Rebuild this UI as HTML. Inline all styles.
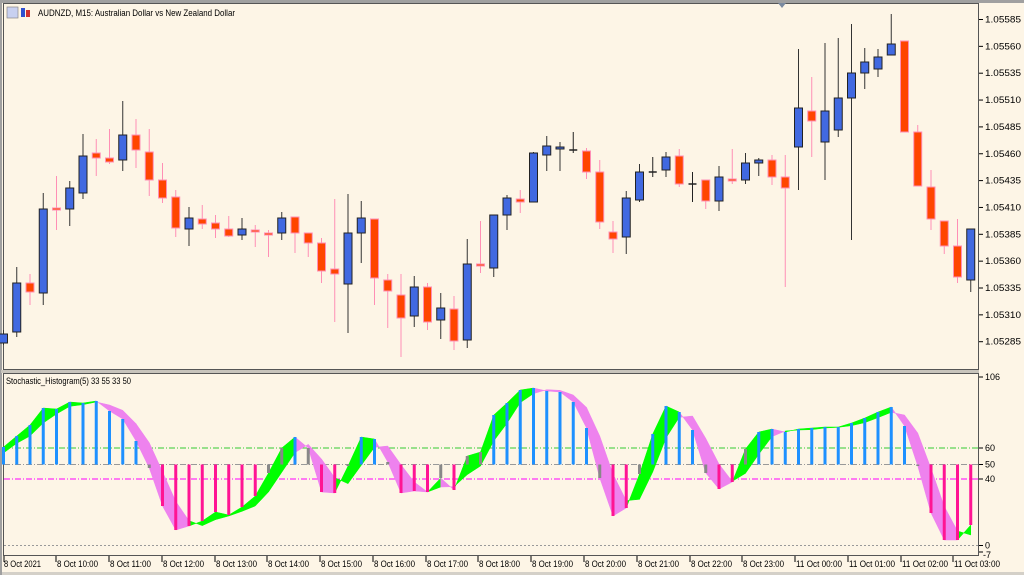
<!DOCTYPE html>
<html><head><meta charset="utf-8"><style>
html,body{margin:0;padding:0;background:#fdf5e6;width:1024px;height:575px;overflow:hidden}
svg{display:block}
text{font-family:"Liberation Sans",sans-serif;font-size:9px;fill:#000}
</style></head><body>
<svg id="s" width="1024" height="575" xmlns="http://www.w3.org/2000/svg">
<rect x="0" y="0" width="1024" height="575" fill="#fdf5e6"/>
<rect x="0" y="0" width="1024" height="3" fill="#a0a0a0"/>
<rect x="0" y="572" width="1024" height="3" fill="#d4d0c8"/>
<rect x="0" y="0" width="2" height="575" fill="#a0a0a0"/>
<rect x="3.5" y="3.5" width="975" height="366" fill="none" stroke="#555" stroke-width="1"/>
<rect x="3.5" y="373.5" width="975" height="182" fill="none" stroke="#555" stroke-width="1"/>
<rect x="1" y="370" width="978" height="3" fill="#c8c4bc"/>
<polygon points="778,3 786,3 782,8" fill="#7a8aa0"/>
<g id="lv"></g>
<g id="band"></g>
<g id="hist"></g>
<g id="candles"></g>
<!-- title -->
<rect x="7" y="7" width="11" height="11" fill="#c8d0f0" stroke="#888" stroke-width="0.7"/>
<rect x="21" y="8" width="4" height="9" fill="#3050d0"/><rect x="26" y="10" width="4" height="7" fill="#d03030"/>
<text x="38" y="16" textLength="197" lengthAdjust="spacingAndGlyphs">AUDNZD, M15:  Australian Dollar vs New Zealand Dollar</text>
<text x="6" y="384" textLength="125" lengthAdjust="spacingAndGlyphs">Stochastic_Histogram(5) 33 55 33 50</text>
<g id="pl"></g>
<g id="tl"></g>
</svg>
<script>
const NS="http://www.w3.org/2000/svg";
function el(p,t,a,txt){const e=document.createElementNS(NS,t);for(const k in a)e.setAttribute(k,a[k]);if(txt!==undefined)e.textContent=txt;document.getElementById(p).appendChild(e);return e;}
const X=i=>3.5+13.25*i;
// candles: [high, bodyTop, bodyBottom, low, bull]
const C=[[330,334,343,345,1],[267,283,332,337,1],[274,283,292,305,0],[193,209,293,305,1],[176,208,210,230,0],[181,188,209,226,1],[134,156,193,199,1],[139,153,158,176,0],[129,158,162,164,0],[101,135,160,171,1],[119,135,150,168,0],[129,152,180,196,0],[163,180,198,203,0],[190,197,228,237,0],[207,218,229,246,1],[205,219,224,229,0],[215,223,229,238,0],[216,229,236,237,0],[218,229,235,240,1],[225,230,232,247,0],[230,233,235,257,0],[212,218,233,240,1],[217,217,233,253,0],[233,233,243,257,0],[238,243,271,283,0],[199,269,274,322,0],[194,233,284,333,1],[201,218,233,263,1],[219,219,278,305,0],[274,280,291,328,0],[274,295,318,357,0],[276,287,316,327,1],[283,287,322,330,0],[293,308,320,339,1],[296,309,341,350,0],[239,264,340,348,1],[221,264,265,273,0],[215,215,268,277,1],[195,198,215,230,1],[190,199,202,213,0],[152,153,202,202,1],[136,146,155,171,1],[142,147,149,171,1],[132,150,150,153,2],[148,151,172,179,0],[160,172,222,229,0],[221,232,239,253,0],[191,198,237,254,1],[164,172,200,202,1],[157,172,172,177,2],[152,157,170,177,1],[149,156,184,187,0],[172,184,184,202,2],[180,180,201,209,0],[166,177,201,211,1],[149,179,180,184,0],[153,163,180,184,1],[158,160,163,176,1],[155,160,177,185,0],[155,177,188,287,0],[49,108,147,190,1],[77,111,121,157,0],[43,111,142,180,1],[38,98,130,137,1],[24,73,98,240,1],[48,62,73,89,1],[49,57,69,77,1],[14,44,55,55,1],[41,41,132,132,0],[125,132,186,186,0],[170,187,219,230,0],[221,221,246,254,0],[219,246,277,283,0],[229,229,280,292,1]];
C.forEach((c,i)=>{const x=X(i);const [h,t,b,l,k]=c;
 const wc=k==1?"#333":(k==2?"#222":"#ff8fb5");
 el("candles","line",{x1:x,x2:x,y1:h,y2:l,stroke:wc,"stroke-width":1});
 if(k==2){el("candles","line",{x1:x-4,x2:x+4,y1:t,y2:t,stroke:"#222","stroke-width":1.5});return;}
 const hh=Math.max(b-t,2);
 el("candles","rect",{x:x-4,y:t,width:8,height:hh,fill:k==1?"#4169e1":"#ff4500",stroke:k==1?"#222":"#ff8fb5","stroke-width":1});
});
// levels
const L=[[448,"#3c3","6,2,1,2"],[464.5,"#999","6,2,1,2"],[479,"#f0f","6,2,1,2"],[545.5,"#999","2,2"]];
L.forEach(l=>el("lv","line",{x1:4,x2:978,y1:l[0],y2:l[0],stroke:l[1],"stroke-width":1,"stroke-dasharray":l[2]}));
// histogram main values (y px)
const M=[447,436,425,408,409,402,403,401,411,419,441,468,506,530,526,521,512,515,507,496,473,448,437,448,492,493,466,437,439,462,493,491,492,478,490,456,452,415,403,390,388,391,392,402,428,478,516,508,474,434,406,412,430,473,489,482,449,432,429,432,429,428,427,427,423,418,412,407,426,466,513,540,540,525];
const S=M.map((v,i)=>{const a=M[Math.max(0,i-1)],b=M[Math.max(0,i-2)];return (v+a+b)/3+(i==0?6:0);});
for(let i=0;i<M.length-1;i++){
 const up=M[i+1]<S[i+1];
 el("band","polygon",{points:`${X(i)},${M[i]} ${X(i+1)},${M[i+1]} ${X(i+1)},${S[i+1]} ${X(i)},${S[i]}`,fill:up?"#00ff00":"#ee82ee",stroke:up?"#00ff00":"#ee82ee","stroke-width":0.5});
}
M.forEach((v,i)=>{const b=464.5;let c;
 if(v<=447)c="#1e90ff";else if(v>=480)c="#ff1493";else c="#888";
 if(Math.abs(v-b)<1)return;
 el("hist","rect",{x:X(i)-1.5,y:Math.min(v,b),width:3,height:Math.abs(v-b),fill:c});
});
// price labels
const P=["1.05585","1.05560","1.05535","1.05510","1.05485","1.05460","1.05435","1.05410","1.05385","1.05360","1.05335","1.05310","1.05285"];
P.forEach((p,i)=>{const y=19.5+26.85*i;el("pl","line",{x1:979,x2:983,y1:y,y2:y,stroke:"#000"});el("pl","text",{x:985,y:y+3,textLength:36,lengthAdjust:"spacingAndGlyphs"},p);});
[[377,"106"],[448,"60"],[464.5,"50"],[479,"40"],[545.5,"0"],[555,"-7"]].forEach(a=>{el("pl","line",{x1:979,x2:983,y1:a[1]==="-7"?552:a[0],y2:a[1]==="-7"?552:a[0],stroke:"#000"});el("pl","text",{x:a[1]==="-7"?983:985,y:a[0]+3},a[1]);});
// time labels
const T=[[4,"8 Oct 2021"],[56,"8 Oct 10:00"],[109,"8 Oct 11:00"],[162,"8 Oct 12:00"],[215,"8 Oct 13:00"],[267,"8 Oct 14:00"],[320,"8 Oct 15:00"],[373,"8 Oct 16:00"],[426,"8 Oct 17:00"],[478,"8 Oct 18:00"],[531,"8 Oct 19:00"],[584,"8 Oct 20:00"],[637,"8 Oct 21:00"],[690,"8 Oct 22:00"],[742,"8 Oct 23:00"],[795,"11 Oct 00:00"],[848,"11 Oct 01:00"],[901,"11 Oct 02:00"],[953,"11 Oct 03:00"]];
T.forEach(t=>{el("tl","line",{x1:t[0],x2:t[0],y1:556,y2:562,stroke:"#000"});el("tl","text",{x:t[0]+(t[0]==4?0:1),y:567,textLength:t[1].length==12?46:(t[1]=="8 Oct 2021"?37:41),lengthAdjust:"spacingAndGlyphs"},t[1]);});
</script>
</body></html>
